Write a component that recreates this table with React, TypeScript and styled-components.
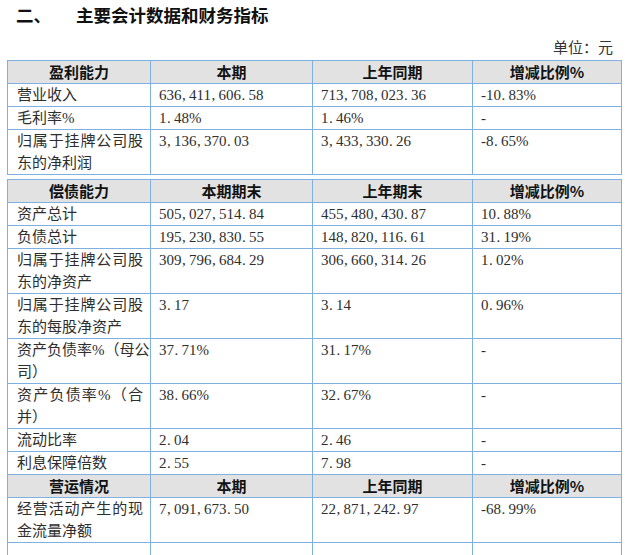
import React from "react";
import styled, { createGlobalStyle } from "styled-components";

const Global = createGlobalStyle`
  html, body { margin: 0; padding: 0; background: #ffffff; }
  body { font-family: "Liberation Serif", "Noto Sans CJK SC", serif; }
`;

const Page = styled.div`
  width: 625px;
  padding: 0 0 0 7px;
  box-sizing: border-box;
`;

const Title = styled.h2`
  margin: 0;
  height: 28px;
  display: flex;
  align-items: center;
  font-family: "Noto Sans CJK SC", sans-serif;
  font-size: 17.5px;
  font-weight: 700;
  color: #111;
  padding-left: 9px;
`;

const TitleNo = styled.span`
  width: 60px;
`;

const Unit = styled.div`
  margin-top: 9px;
  height: 23px;
  line-height: 23px;
  text-align: right;
  padding-right: 12px;
  font-size: 15px;
  color: #333;
`;

const Table = styled.table<{ $gap?: boolean }>`
  border-collapse: collapse;
  table-layout: fixed;
  width: 614px;
  margin-top: ${(p) => (p.$gap ? "4px" : "0")};
`;

const HeadCell = styled.th`
  border: 1px solid #7fb0e2;
  background: #e2e2e2;
  height: 22px;
  padding: 0;
  line-height: 22px;
  text-align: center;
  font-family: "Noto Sans CJK SC", sans-serif;
  font-size: 15px;
  font-weight: 700;
  color: #111;
`;

const Cell = styled.td`
  border: 1px solid #7fb0e2;
  padding: 0 6px 0 8px;
  vertical-align: top;
  line-height: 22px;
  height: 22px;
  font-size: 15px;
  color: #2e2e2e;
  white-space: nowrap;
`;

const LabelCell = styled(Cell)`
  padding: 0 7px 0 9px;
`;

const Line = styled.div<{ $justify?: boolean }>`
  text-align: ${(p) => (p.$justify ? "justify" : "left")};
  text-align-last: ${(p) => (p.$justify ? "justify" : "left")};
  text-justify: inter-character;
`;

const Punct = styled.span`
  display: inline-block;
  width: 7.5px;
  text-align: left;
  padding-left: 0.5px;
  box-sizing: border-box;
`;

const Num = ({ value }: { value: string }) => (
  <>
    {value.split("").map((ch, i) =>
      ch === "," || ch === "." ? <Punct key={i}>{ch}</Punct> : <React.Fragment key={i}>{ch}</React.Fragment>
    )}
  </>
);

type Row = { label: string[]; a: string; b: string; c: string } | { head: string[] };

const cols = [143, 162, 160, 149];

const Label = ({ lines }: { lines: string[] }) => (
  <>
    {lines.map((l, i) => (
      <Line key={i} $justify={i < lines.length - 1}>
        {l}
      </Line>
    ))}
  </>
);

const Rows = ({ rows }: { rows: Row[] }) => (
  <tbody>
    {rows.map((r, i) =>
      "head" in r ? (
        <tr key={i}>
          {r.head.map((h) => (
            <HeadCell key={h}>{h}</HeadCell>
          ))}
        </tr>
      ) : (
        <tr key={i}>
          <LabelCell>
            <Label lines={r.label} />
          </LabelCell>
          <Cell><Num value={r.a} /></Cell>
          <Cell><Num value={r.b} /></Cell>
          <Cell><Num value={r.c} /></Cell>
        </tr>
      )
    )}
  </tbody>
);

const table1: Row[] = [
  { head: ["盈利能力", "本期", "上年同期", "增减比例%"] },
  { label: ["营业收入"], a: "636,411,606.58", b: "713,708,023.36", c: "-10.83%" },
  { label: ["毛利率%"], a: "1.48%", b: "1.46%", c: "-" },
  { label: ["归属于挂牌公司股", "东的净利润"], a: "3,136,370.03", b: "3,433,330.26", c: "-8.65%" },
];

const table2: Row[] = [
  { head: ["偿债能力", "本期期末", "上年期末", "增减比例%"] },
  { label: ["资产总计"], a: "505,027,514.84", b: "455,480,430.87", c: "10.88%" },
  { label: ["负债总计"], a: "195,230,830.55", b: "148,820,116.61", c: "31.19%" },
  { label: ["归属于挂牌公司股", "东的净资产"], a: "309,796,684.29", b: "306,660,314.26", c: "1.02%" },
  { label: ["归属于挂牌公司股", "东的每股净资产"], a: "3.17", b: "3.14", c: "0.96%" },
  { label: ["资产负债率%（母公", "司）"], a: "37.71%", b: "31.17%", c: "-" },
  { label: ["资产负债率%（合", "并）"], a: "38.66%", b: "32.67%", c: "-" },
  { label: ["流动比率"], a: "2.04", b: "2.46", c: "-" },
  { label: ["利息保障倍数"], a: "2.55", b: "7.98", c: "-" },
  { head: ["营运情况", "本期", "上年同期", "增减比例%"] },
  { label: ["经营活动产生的现", "金流量净额"], a: "7,091,673.50", b: "22,871,242.97", c: "-68.99%" },
  { label: ["\u00a0", "\u00a0"], a: "", b: "", c: "" },
];

const Cols = () => (
  <colgroup>
    {cols.map((w, i) => (
      <col key={i} style={{ width: w }} />
    ))}
  </colgroup>
);

export default function App() {
  return (
    <Page>
      <Global />
      <Title>
        <TitleNo>二、</TitleNo>
        主要会计数据和财务指标
      </Title>
      <Unit>单位：元</Unit>
      <Table>
        <Cols />
        <Rows rows={table1} />
      </Table>
      <Table $gap>
        <Cols />
        <Rows rows={table2} />
      </Table>
    </Page>
  );
}
